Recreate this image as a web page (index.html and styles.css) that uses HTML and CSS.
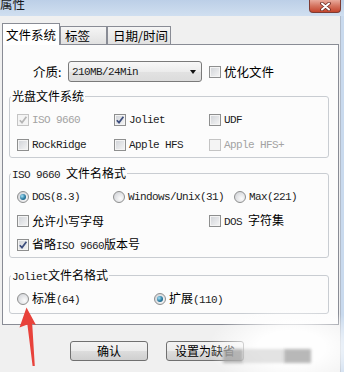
FILE: index.html
```html
<!DOCTYPE html>
<html>
<head>
<meta charset="utf-8">
<link rel="stylesheet" href="styles.css">
</head>
<body>
<div class="titlebar">
  <span class="title">属性</span>
  <span class="close">
    <svg width="11" height="9" viewBox="0 0 11 9"><path d="M2 1.5 L9 7.5 M9 1.5 L2 7.5" stroke="#6b2a22" stroke-width="3.6" stroke-linecap="round"/><path d="M2 1.5 L9 7.5 M9 1.5 L2 7.5" stroke="#ffffff" stroke-width="2" stroke-linecap="round"/></svg>
  </span>
</div>
<div class="client">
  <div class="tabs">
    <div class="tab active">文件系统</div>
    <div class="tab t2">标签</div>
    <div class="tab t3">日期/时间</div>
  </div>
  <div class="panel">
    <div class="media-row">
      <span class="media-label">介质:</span>
      <div class="select"><span class="m">210MB/24Min</span><span class="arrow"></span></div>
      <span class="item opt"><span class="cb"></span><span class="lbl">优化文件</span></span>
    </div>

    <fieldset class="group g1">
      <legend>光盘文件系统</legend>
      <div class="rows">
        <div class="row">
          <span class="item w1 dis"><span class="cb checked"><svg viewBox="0 0 10 10"><path d="M1.8 5.2 L4 7.6 L8.4 1.8"/></svg></span><span class="lbl m">ISO 9660</span></span>
          <span class="item w2"><span class="cb checked"><svg viewBox="0 0 10 10"><path d="M1.8 5.2 L4 7.6 L8.4 1.8"/></svg></span><span class="lbl m">Joliet</span></span>
          <span class="item"><span class="cb"></span><span class="lbl m">UDF</span></span>
        </div>
        <div class="row">
          <span class="item w1"><span class="cb"></span><span class="lbl m">RockRidge</span></span>
          <span class="item w2"><span class="cb"></span><span class="lbl m">Apple HFS</span></span>
          <span class="item dis"><span class="cb"></span><span class="lbl m">Apple HFS+</span></span>
        </div>
      </div>
    </fieldset>

    <fieldset class="group g2">
      <legend><span class="m">ISO 9660 </span>文件名格式</legend>
      <div class="rows">
        <div class="row">
          <span class="item r1"><span class="rb on"></span><span class="lbl m">DOS(8.3)</span></span>
          <span class="item r2"><span class="rb"></span><span class="lbl m">Windows/Unix(31)</span></span>
          <span class="item"><span class="rb"></span><span class="lbl m">Max(221)</span></span>
        </div>
        <div class="row">
          <span class="item w12"><span class="cb"></span><span class="lbl">允许小写字母</span></span>
          <span class="item"><span class="cb"></span><span class="lbl"><span class="m">DOS </span>字符集</span></span>
        </div>
        <div class="row">
          <span class="item"><span class="cb checked"><svg viewBox="0 0 10 10"><path d="M1.8 5.2 L4 7.6 L8.4 1.8"/></svg></span><span class="lbl">省略<span class="m">ISO 9660</span>版本号</span></span>
        </div>
      </div>
    </fieldset>

    <fieldset class="group g3">
      <legend><span class="m">Joliet</span>文件名格式</legend>
      <div class="rows">
        <div class="row">
          <span class="item j1"><span class="rb"></span><span class="lbl">标准<span class="m">(64)</span></span></span>
          <span class="item"><span class="rb on"></span><span class="lbl">扩展<span class="m">(110)</span></span></span>
        </div>
      </div>
    </fieldset>
  </div>

  <div class="buttons">
    <div class="btn">确认</div>
    <div class="btn">设置为缺省</div>
  </div>
</div>

<div class="watermark">
  <span class="wm-block b1"></span>
  <span class="wm-block b2"></span>
  <span class="wm-block b3"></span>
</div>

<svg class="red-arrow" width="22" height="64" viewBox="0 0 22 64">
  <polygon points="8.5,1.5 18,19 14.2,17.8 16.8,60 14.6,60 9.4,18.5 1.5,21.5" fill="#e8423b"/>
</svg>
</body>
</html>
```

FILE: styles.css
```css
* { box-sizing: border-box; }
html, body { margin: 0; padding: 0; }
body {
  width: 344px;
  height: 372px;
  overflow: hidden;
  position: relative;
  background: #c9daee;
  font-family: "Noto Sans CJK SC", "Microsoft YaHei", sans-serif;
  font-size: 12px;
  line-height: 16px;
  color: #000;
}
.m {
  font-family: "Liberation Mono", monospace;
  font-size: 11px;
  letter-spacing: -0.6px;
  color: #1c1c1c;
}
.dis .m { color: inherit; }

/* title bar */
.titlebar {
  height: 16px;
  display: flex;
  justify-content: space-between;
  align-items: flex-start;
  background: linear-gradient(#bccfe7, #d0dff0);
  overflow: hidden;
}
.title {
  font-size: 12.5px;
  line-height: 12px;
  margin-top: -2px;
  color: #1a1a1a;
}
.close {
  width: 32px;
  height: 13px;
  margin-right: 3px;
  border: 1px solid #7e3b33;
  border-top: none;
  border-radius: 0 0 4px 4px;
  background: linear-gradient(#e9aa9c, #d4735f 50%, #c4452d);
  display: flex;
  justify-content: center;
  align-items: center;
}

/* client */
.client {
  width: 341px;
  height: 356px;
  background: #f0f0f0;
  border-right: 1px solid #b2bccb;
  padding-top: 7px;
}
.tabs {
  display: flex;
  align-items: flex-end;
  height: 21px;
  padding-left: 2px;
}
.tab {
  height: 18px;
  border: 1px solid #898c95;
  border-bottom: none;
  background: linear-gradient(#f5f5f5, #e1e1e1);
  font-size: 12.5px;
  line-height: 17px;
  padding-left: 4px;
  white-space: nowrap;
}
.tab.active {
  width: 58px;
  height: 22px;
  margin-bottom: -1px;
  background: #fff;
  padding-left: 3px;
  line-height: 21px;
  position: relative;
  z-index: 1;
}
.tab.t2 { width: 47px; }
.tab.t3 { width: 64px; padding-left: 5px; }

.panel {
  width: 337px;
  margin-left: 2px;
  border: 1px solid #898c95;
  background: #fcfcfc;
  padding: 0 0 10px 0;
}

/* media row */
.media-row {
  display: flex;
  align-items: center;
  height: 21px;
  margin-top: 16px;
}
.media-label {
  margin-left: 30px;
  width: 35px;
  font-size: 12.5px;
}
.select {
  width: 134px;
  height: 21px;
  border: 1px solid #7a7a7a;
  border-radius: 3px;
  background: linear-gradient(#f8f8f8, #ececec 50%, #e2e2e2 51%, #dcdcdc);
  display: flex;
  align-items: center;
  justify-content: space-between;
  padding: 0 5px 0 3px;
}
.arrow {
  width: 0;
  height: 0;
  border-left: 3.5px solid transparent;
  border-right: 3.5px solid transparent;
  border-top: 4px solid #111;
}
.opt { margin-left: 7px; font-size: 12.5px; }

/* checkbox / radio */
.item {
  display: flex;
  align-items: center;
  gap: 3px;
  white-space: nowrap;
}
.cb {
  width: 12px;
  height: 12px;
  flex: none;
  border: 1px solid #8e8f8f;
  background: linear-gradient(135deg, #cfd2d7, #f6f6f6);
  box-shadow: inset 0 0 0 1px #f4f4f4;
  display: flex;
  align-items: center;
  justify-content: center;
}
.cb svg { width: 10px; height: 10px; }
.cb svg path {
  fill: none;
  stroke: #3d4e7d;
  stroke-width: 1.7;
}
.dis { color: #a3a3a3; }
.dis .cb {
  border-color: #c4c4c4;
  background: #f4f4f4;
  box-shadow: none;
}
.dis .cb svg path { stroke: #b5b5b5; }
.rb {
  width: 12px;
  height: 12px;
  flex: none;
  border-radius: 50%;
  border: 1px solid #8e8f8f;
  background: radial-gradient(circle at 65% 65%, #fbfbfb, #d4d6da 80%);
  display: flex;
  align-items: center;
  justify-content: center;
}
.rb.on::after {
  content: "";
  width: 6px;
  height: 6px;
  border-radius: 50%;
  background: radial-gradient(circle at 35% 35%, #a7e2f8, #2a7aa0 55%, #14506f);
}

/* groups */
.group {
  margin: 6px 0 0 6px;
  width: 320px;
  min-width: 0;
  padding: 0;
  border: 1px solid #c9cdd2;
  border-radius: 3px;
}
.group legend {
  padding: 0 1px;
  margin-left: 1px;
  line-height: 16px;
  height: 16px;
  font-size: 12px;
}
.rows { padding: 3px 0 0 7px; }
.row {
  display: flex;
  align-items: center;
  height: 25px;
}
.w1 { width: 97px; }
.w2 { width: 95px; }
.g2 { margin-top: 7px; }
.g2 .rows { padding-top: 4px; }
.g2 .row { height: 24px; }
.r1 { width: 96px; }
.r2 { width: 121px; }
.w12 { width: 192px; }
.g3 { margin-top: 9px; }
.g3 .rows { padding: 4px 0 2px 7px; }
.g3 .row { height: 24px; }
.j1 { width: 137px; }

/* buttons */
.buttons {
  display: flex;
  gap: 18px;
  margin-top: 16px;
  padding-left: 70px;
}
.btn {
  width: 78px;
  height: 20px;
  border: 1px solid #707070;
  border-radius: 3px;
  background: linear-gradient(#f3f3f3, #ebebeb 50%, #dddddd 51%, #cfcfcf);
  text-align: center;
  line-height: 18px;
  font-size: 12px;
}

/* overlays */
.watermark {
  position: absolute;
  left: 205px;
  top: 296px;
  width: 139px;
  height: 76px;
  background: radial-gradient(ellipse 60% 55% at 62% 68%, rgba(255,255,255,0.95) 40%, rgba(255,255,255,0) 100%);
}
.wm-block {
  position: absolute;
  top: 53px;
  height: 14px;
  filter: blur(1.5px);
}
.b1 { left: 18px; width: 20px; background: rgba(160,160,160,0.75); }
.b2 { left: 38px; width: 41px; background: rgba(200,200,200,0.5); }
.b3 { left: 79px; width: 27px; background: rgba(160,160,160,0.75); }
.red-arrow {
  position: absolute;
  left: 18px;
  top: 306px;
}
```
